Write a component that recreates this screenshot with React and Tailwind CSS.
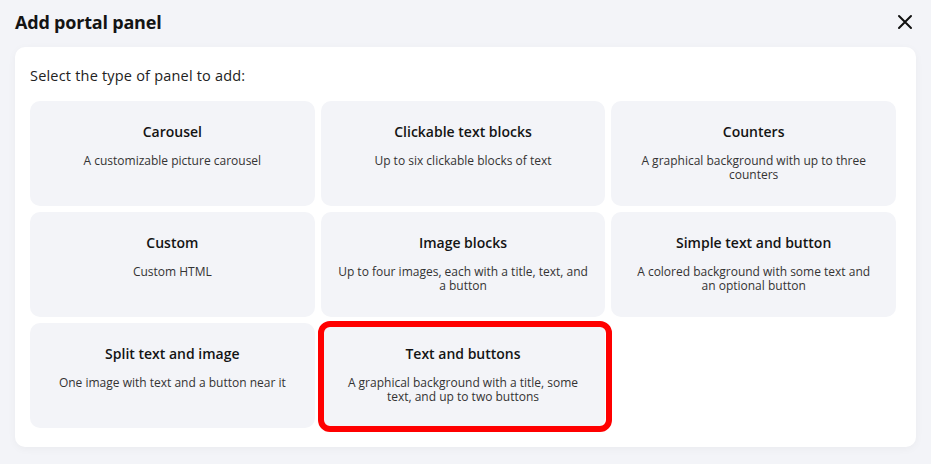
import React from 'react'

const panels = [
  { title: 'Carousel', text: 'A customizable picture carousel' },
  { title: 'Clickable text blocks', text: 'Up to six clickable blocks of text' },
  { title: 'Counters', text: 'A graphical background with up to three counters' },
  { title: 'Custom', text: 'Custom HTML' },
  { title: 'Image blocks', text: 'Up to four images, each with a title, text, and a button', wide: true },
  { title: 'Simple text and button', text: 'A colored background with some text and an optional button' },
  { title: 'Split text and image', text: 'One image with text and a button near it' },
  { title: 'Text and buttons', text: 'A graphical background with a title, some text, and up to two buttons', selected: true },
]

const PanelCard = ({ title, text, selected, wide }) => (
  <div className={`relative h-[105px] rounded-[10px] bg-[#f3f4f8] pt-[21px] text-center ${wide ? 'px-[14px]' : 'px-[18px]'}`}>
    <div className="text-[14px] leading-[20px] font-semibold text-[#141414]">{title}</div>
    <div className="mt-[12px] text-[12px] leading-[14px] text-[#333]">{text}</div>
    {selected && (
      <div className="pointer-events-none absolute -left-[3px] -right-[7px] -top-[2px] -bottom-[4px] rounded-[12px] border-[6px] border-[#ff0000]" />
    )}
  </div>
)

export default function App() {
  return (
    <div className="h-[464px] w-[931px] bg-[#f3f4f8] font-['Open_Sans',sans-serif] text-[#141414]">
      <div className="flex h-[44px] items-center justify-between pl-[15px] pr-[18px]">
        <h1 className="text-[18px] font-bold tracking-[-0.2px]">Add portal panel</h1>
        <svg width="16" height="16" viewBox="0 0 16 16" fill="none" stroke="#111" strokeWidth="2" strokeLinecap="round">
          <path d="M2 2L14 14M14 2L2 14" />
        </svg>
      </div>
      <div className="mx-[15px] mt-[3px] h-[400px] rounded-[10px] bg-white pl-[15px] pr-[20px] pt-[19px] shadow-[0_2px_8px_rgba(0,0,0,0.04)]">
        <p className="text-[14.5px] leading-[20px] tracking-[0.2px] text-[#222]">Select the type of panel to add:</p>
        <div className="mt-[15px] grid grid-cols-3 gap-[6px]">
          {panels.map((p) => (
            <PanelCard key={p.title} {...p} />
          ))}
        </div>
      </div>
    </div>
  )
}
